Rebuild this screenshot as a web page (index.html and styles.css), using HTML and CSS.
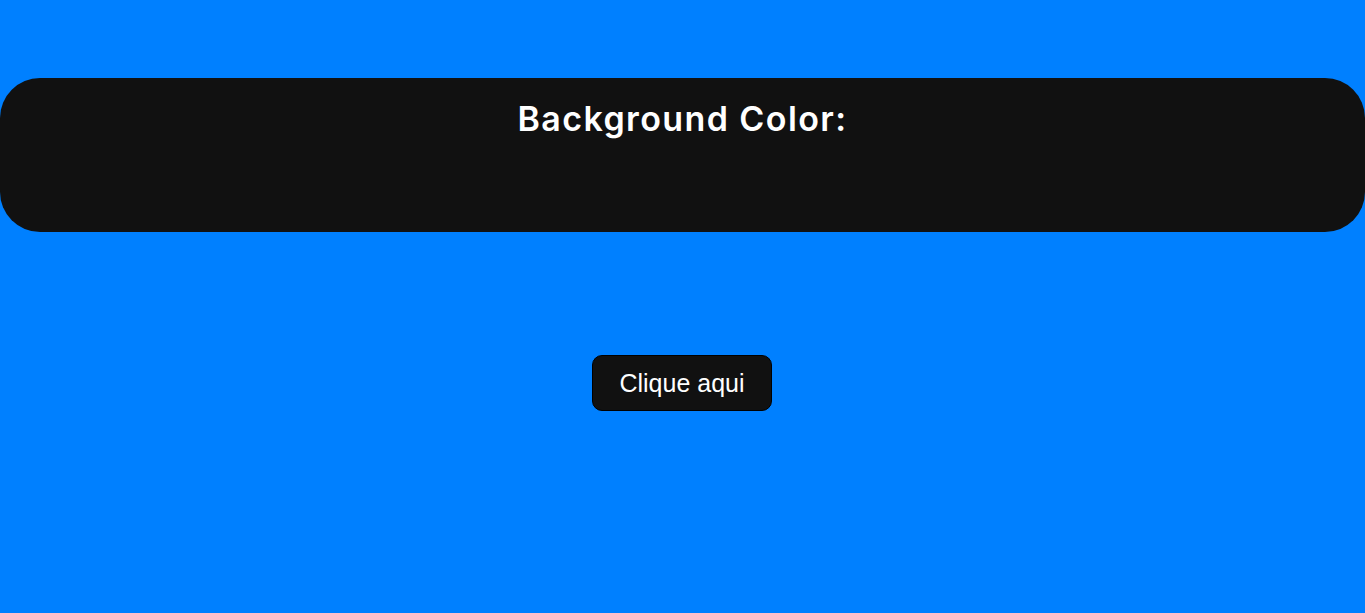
FILE: index.html
```html
<!DOCTYPE html>
<html lang="pt">
<head>
<meta charset="utf-8">
<title>Background Color</title>
<link rel="stylesheet" href="styles.css">
</head>
<body>
<main class="page">
  <section class="panel">
    <h1 class="title">Background Color:</h1>
  </section>
  <div class="actions">
    <button class="btn" type="button">Clique aqui</button>
  </div>
</main>
</body>
</html>
```
FILE: styles.css
```css
html, body {
  margin: 0;
  padding: 0;
  background: #0080ff;
  height: 100%;
}
.page {
  padding-top: 78px;
  display: flex;
  flex-direction: column;
  align-items: stretch;
}
.panel {
  background: #111111;
  height: 154px;
  border-radius: 40px;
  box-sizing: border-box;
  padding-top: 22px;
  text-align: center;
}
.title {
  margin: 0;
  color: #ffffff;
  font-family: "Inter", "Noto Sans", sans-serif;
  font-weight: 600;
  font-size: 34px;
  line-height: 38px;
  letter-spacing: 1.4px;
}
.actions {
  display: flex;
  justify-content: center;
  padding-top: 123px;
}
.btn {
  background: #111111;
  color: #ffffff;
  border: 1px solid #000;
  border-radius: 10px;
  width: 180px;
  height: 56px;
  font-family: "Liberation Sans", Arial, sans-serif;
  font-size: 25px;
  padding: 0;
  margin-left: -1px;
  cursor: pointer;
}
```
